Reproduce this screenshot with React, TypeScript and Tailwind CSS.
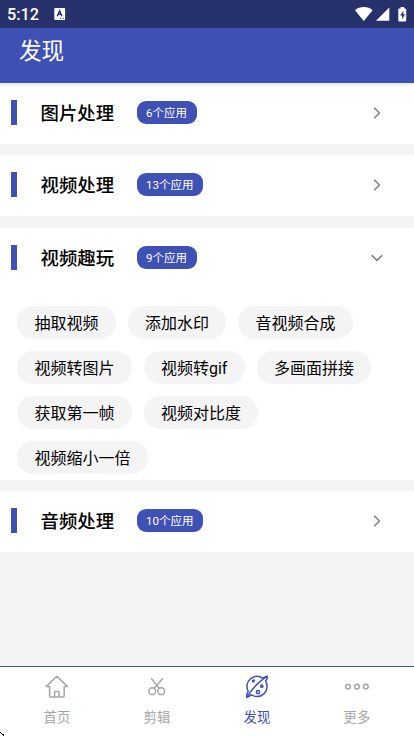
import React from 'react'

type Section = {
  title: string
  count: number
  tools?: string[]
}

const sections: Section[] = [
  { title: '图片处理', count: 6 },
  { title: '视频处理', count: 13 },
  {
    title: '视频趣玩',
    count: 9,
    tools: [
      '抽取视频',
      '添加水印',
      '音视频合成',
      '视频转图片',
      '视频转gif',
      '多画面拼接',
      '获取第一帧',
      '视频对比度',
      '视频缩小一倍'
    ]
  },
  { title: '音频处理', count: 10 }
]

function StatusBar() {
  return (
    <div className="flex h-7 shrink-0 items-center bg-[#27316c] pl-[7px] pr-[7.5px] text-white">
      <span className="pt-px text-[16.2px] font-medium leading-7">5:12</span>
      <svg className="ml-[15px]" width="12" height="12" viewBox="0 0 12 12">
        <rect x="0.3" y="0" width="10.8" height="12" rx="1" fill="#fff" />
        <path d="M3.2 8.2 5.6 2.8 8 8.2M4.2 6.3h2.9" fill="none" stroke="#27316c" strokeWidth="1.4" />
        <path d="M6 10.3h1.2M8.6 10.3h1.2" stroke="#27316c" strokeWidth="1" />
      </svg>
      <svg className="ml-auto" width="18" height="15" viewBox="0 0 18 15">
        <path d="M0 3.2C2.3 1.1 5.4 0 8.8 0s6.5 1.1 8.8 3.2L8.8 14z" fill="#fff" />
      </svg>
      <svg className="ml-[3px]" width="14" height="14" viewBox="0 0 14 14">
        <path d="M13.3.4v13.4H0z" fill="#fff" />
      </svg>
      <svg className="ml-2" width="9" height="15" viewBox="0 0 9 15">
        <path d="M2.6 0h3.6v1.4h1.1c.5 0 .9.4.9.9v11.2c0 .5-.4.9-.9.9H1.2c-.5 0-.9-.4-.9-.9V2.3c0-.5.4-.9.9-.9h1.4z" fill="#fff" />
        <path d="M5.4 3.5 2.2 8.4h1.9v3.8l3-5H5.2z" fill="#27316c" />
      </svg>
    </div>
  )
}

function SectionCard({ title, count, tools }: Section) {
  return (
    <section className="bg-white">
      <div className="flex h-[61px] items-center pl-[11.4px] pr-[30.5px] pb-[2px]">
        <span className="h-[25px] w-[5.6px] bg-[#3f51b5]" />
        <h2 className="ml-[23.5px] pt-[2px] text-[18.4px] font-medium leading-7 text-black">{title}</h2>
        <span className="ml-[22.5px] h-[23px] rounded-[9px] bg-[#3f51b5] px-[9.5px] text-[11.5px] leading-[25px] text-white">
          {count}个应用
        </span>
        <svg
          className={tools ? 'ml-auto rotate-90' : 'ml-auto'}
          width="14"
          height="14"
          viewBox="0 0 14 14"
          fill="none"
          stroke="#7c7c7c"
          strokeWidth="1.5"
        >
          <path d="M4.2 1.8 9.4 7 4.2 12.2" />
        </svg>
      </div>
      {tools && (
        <div className="flex flex-wrap gap-x-[11.8px] gap-y-3 px-[17px] pt-[17px] pb-[6px]">
          {tools.map((tool) => (
            <span key={tool} className="h-[33px] rounded-[16px] bg-[#f4f4f4] px-[17.4px] text-base leading-[35px] text-black">
              {tool}
            </span>
          ))}
        </div>
      )}
    </section>
  )
}

function HomeIcon() {
  return (
    <svg width="24" height="24" viewBox="0 0 24 24" fill="none" stroke="currentColor" strokeWidth="1.5" strokeLinejoin="round">
      <path d="M4.6 11.4H1.2L11.8 1.3l10.6 10.1h-3.2v9.7q0 .9-.9.9h-12.8q-.9 0-.9-.9z" />
      <path d="M9.6 21.8v-5.2h4.4v5.2" />
    </svg>
  )
}

function ScissorsIcon() {
  return (
    <svg width="24" height="24" viewBox="0 0 24 24" fill="none" stroke="currentColor" strokeWidth="1.5">
      <circle cx="7.2" cy="16.2" r="3.4" />
      <circle cx="16.2" cy="16.2" r="3.4" />
      <path d="M6.2 3.2 14.2 13.4M17.8 3.2 9.2 13.4" />
    </svg>
  )
}

function DiscoverIcon() {
  return (
    <svg width="24" height="24" viewBox="0 0 24 24" fill="none" stroke="currentColor" strokeWidth="1.5" strokeLinejoin="round">
      <path d="M17.6 3.1A10 10 0 0 0 3.2 16.2Q1.4 19.6 1.7 22.3 3.8 21.8 6.2 19.6A10 10 0 0 0 20.6 6.3Q22.4 3.8 22.5 1.4 20 1.4 17.6 3.1" />
      <path d="M22.5 1.4Q18 3.4 12 9.4T1.7 22.3" />
      <circle cx="8.4" cy="5.9" r="0.9" />
      <circle cx="16.8" cy="11.2" r="1.1" />
      <circle cx="13" cy="17.1" r="1.6" />
    </svg>
  )
}

function MoreIcon() {
  return (
    <svg width="24" height="24" viewBox="0 0 24 24" fill="none" stroke="currentColor" strokeWidth="1.5">
      <circle cx="3" cy="11.6" r="2.4" />
      <circle cx="11.9" cy="11.6" r="2.4" />
      <circle cx="20.8" cy="11.6" r="2.4" />
    </svg>
  )
}

const navItems = [
  { label: '首页', icon: <HomeIcon /> },
  { label: '剪辑', icon: <ScissorsIcon /> },
  { label: '发现', icon: <DiscoverIcon />, active: true },
  { label: '更多', icon: <MoreIcon /> }
]

export default function App() {
  return (
    <div className="relative flex h-[736px] w-[414px] flex-col overflow-hidden bg-[#f4f4f4] font-[Roboto,'Noto_Sans_CJK_SC',sans-serif]">
      <StatusBar />
      <header className="h-[55px] shrink-0 bg-[#3f51b5] pl-[19px] pt-1.5">
        <h1 className="text-[22.6px] leading-9 text-white">发现</h1>
      </header>
      <main className="min-h-0 flex-1">
        <div className="h-0">
          <div className="relative h-1 bg-linear-to-b from-black/10 to-transparent" />
        </div>
        <SectionCard {...sections[0]} />
        <div className="h-[11px]" />
        <SectionCard {...sections[1]} />
        <div className="h-3" />
        <SectionCard {...sections[2]} />
        <div className="h-[11px]" />
        <SectionCard {...sections[3]} />
      </main>
      <nav className="flex h-[70px] shrink-0 justify-center border-t border-[#3f51b5] bg-white">
        {navItems.map((item) => (
          <div
            key={item.label}
            className={`flex w-[100px] flex-col items-center pt-2 ${item.active ? 'text-[#3f51b5]' : 'text-[#a6a6a6]'}`}
          >
            {item.icon}
            <span className="mt-[9px] text-[13.4px] leading-5">{item.label}</span>
          </div>
        ))}
      </nav>
      {/* pointer tip at the window corner */}
      <svg className="absolute bottom-0 left-0" width="5" height="4" viewBox="0 0 5 4" shapeRendering="crispEdges">
        <path d="M0 0h1v1H0zM1 1h1v1H1zM2 2h1v1H2zM3 2h1v2H3z" />
      </svg>
    </div>
  )
}
